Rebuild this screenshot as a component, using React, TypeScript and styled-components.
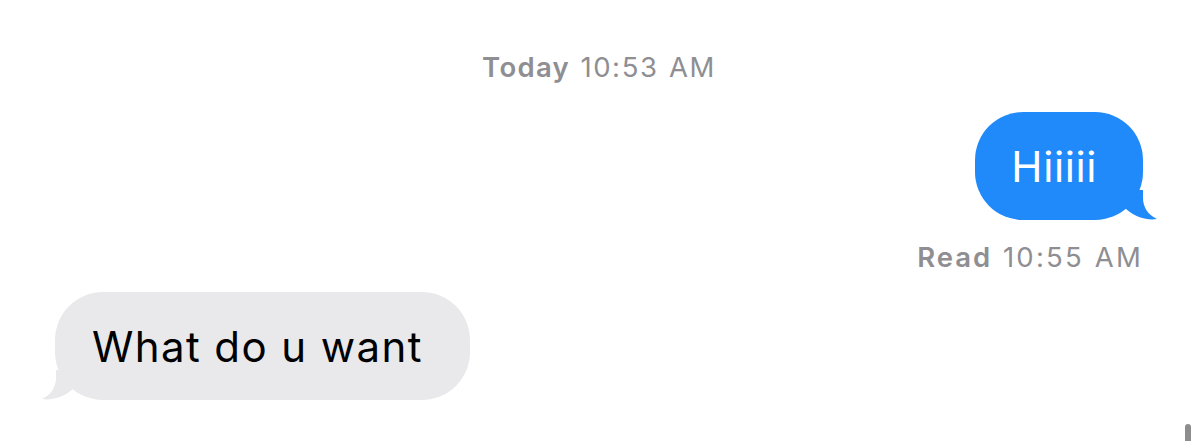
import React from "react";
import styled, { createGlobalStyle } from "styled-components";

const Global = createGlobalStyle`
  html, body { margin: 0; padding: 0; background: #ffffff; }
  body { font-family: Inter, "Noto Sans", "Liberation Sans", sans-serif; -webkit-font-smoothing: antialiased; }
  #root { width: 1200px; height: 441px; overflow: hidden; }
`;

const Thread = styled.div`
  position: relative;
  width: 1200px;
  height: 441px;
  box-sizing: border-box;
  padding: 50px 57px 0 55px;
  display: flex;
  flex-direction: column;
`;

const Stamp = styled.div<{ $align: "center" | "right"; $spacing: number }>`
  font-size: 27.5px;
  line-height: 34px;
  color: #8e8e93;
  text-align: ${(p) => p.$align};
  letter-spacing: ${(p) => p.$spacing}px;
  word-spacing: 1px;
  b { font-weight: 600; letter-spacing: ${(p) => p.$spacing - 0.3}px; }
`;

const Row = styled.div<{ $mine?: boolean }>`
  display: flex;
  justify-content: ${(p) => (p.$mine ? "flex-end" : "flex-start")};
`;

const Bubble = styled.div<{ $mine?: boolean }>`
  position: relative;
  height: 108px;
  box-sizing: border-box;
  border-radius: 48px;
  display: flex;
  align-items: center;
  font-size: 42px;
  letter-spacing: ${(p) => (p.$mine ? "0.6px" : "1.4px")};
  padding: 0 ${(p) => (p.$mine ? "46px 0 36px" : "47px 0 37px")};
  background: ${(p) => (p.$mine ? "#218afb" : "#e9e9eb")};
  color: ${(p) => (p.$mine ? "#ffffff" : "#000000")};
`;

const Tail = styled.svg<{ $mine?: boolean }>`
  position: absolute;
  bottom: 0;
  width: 32px;
  height: 30px;
  ${(p) => (p.$mine ? "right: -15px;" : "left: -14px; transform: scaleX(-1);")}
`;

const Scroll = styled.div`
  position: absolute;
  right: 9px;
  bottom: 0;
  width: 6px;
  height: 17px;
  border-radius: 3px 3px 0 0;
  background: #8d8d8d;
`;

function BubbleTail({ mine, color }: { mine?: boolean; color: string }) {
  return (
    <Tail $mine={mine} viewBox="0 0 32 30">
      <path d="M0 0 L17 0 L17 8 C17 17 22 25 31 29 C22 30.5 10 28 0 19 Z" fill={color} />
    </Tail>
  );
}

export default function App() {
  return (
    <>
      <Global />
      <Thread>
        <Stamp $align="center" $spacing={1.6}>
          <b>Today</b> 10:53 AM
        </Stamp>
        <Row $mine style={{ marginTop: 28 }}>
          <Bubble $mine>
            Hiiiii
            <BubbleTail mine color="#218afb" />
          </Bubble>
        </Row>
        <Stamp $align="right" $spacing={2.2} style={{ marginTop: 20 }}>
          <b>Read</b> 10:55 AM
        </Stamp>
        <Row style={{ marginTop: 18 }}>
          <Bubble>
            What do u want
            <BubbleTail color="#e9e9eb" />
          </Bubble>
        </Row>
        <Scroll />
      </Thread>
    </>
  );
}
